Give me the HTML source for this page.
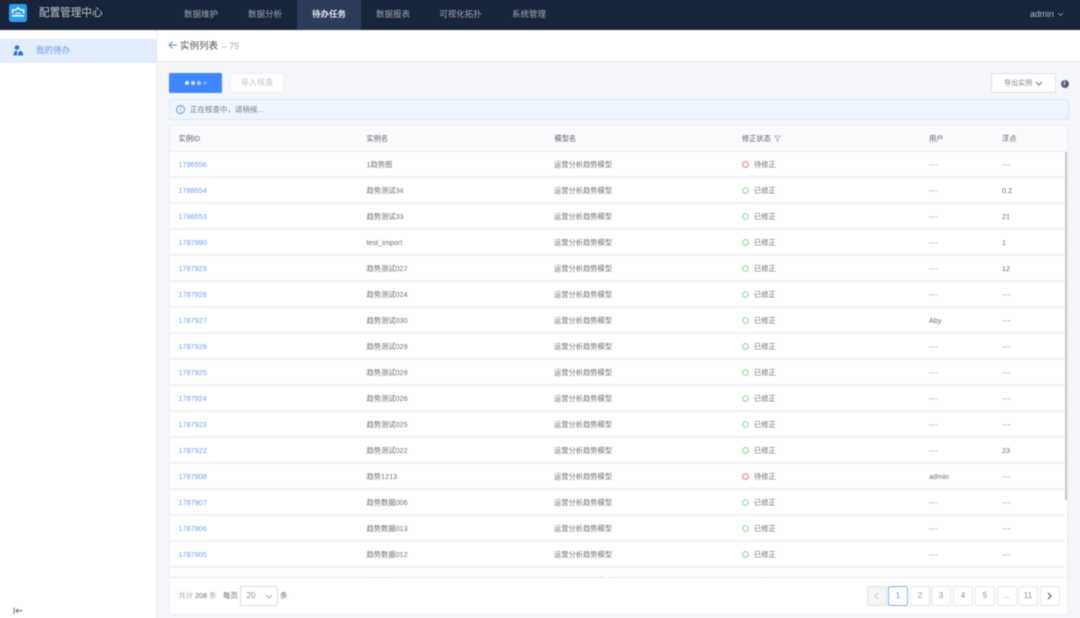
<!DOCTYPE html>
<html lang="zh">
<head>
<meta charset="utf-8">
<title>配置管理中心</title>
<style>
*{box-sizing:border-box;margin:0;padding:0}
html,body{width:1080px;height:618px;overflow:hidden;background:#f4f6fa}
body{position:relative;font-family:"Liberation Sans","Noto Sans CJK SC",sans-serif;font-size:8px;color:#666}
.a{position:absolute;white-space:nowrap}
#blur{position:absolute;left:0;top:0;width:1080px;height:618px;filter:blur(.45px)}
.top{left:-6px;top:-6px;width:1092px;height:36px;background:#18243a}
.nav{top:0;height:30px;line-height:29px;font-size:8.5px;color:#a3a8b2;text-align:center;width:64px}
.nav.on{top:-6px;height:36px;line-height:41px;background:#2d3b58;color:#e6e8ec;font-weight:bold}
.side{left:-6px;top:30px;width:163px;height:596px;background:#fff;border-right:1px solid #e9ebf0}
.head{left:157px;top:30px;width:929px;height:32px;background:#fff;border-bottom:1px solid #e6e8ee}
.tbl{left:169px;top:125px;width:899px;height:490px;background:#fff;border:1px solid #eceef3;overflow:hidden}
.th{left:0;top:0;width:897px;height:26px;background:#fafbfc;border-bottom:1px solid #eceef2}
.rw{left:0;width:895px;height:26px;border-bottom:2px solid #f1f2f5}
.c{position:absolute;top:0;line-height:25px;white-space:nowrap;font-size:7.25px;color:#6c6f75}
.h{line-height:25px;color:#5d6066;font-size:7.2px}
.l{color:#6ba0f5}
.n{letter-spacing:.6px;color:#85888d}
.d{position:absolute;top:8.5px;left:572px;width:7px;height:7px;border-radius:50%;box-shadow:inset 0 0 0 1.5px #a5e3ae}
.d.r{box-shadow:inset 0 0 0 1.5px #f99}
.foot{left:0;top:451px;width:897px;height:38px;background:#fff;border-top:1px solid #e8eaee}
.pg{top:586px;width:20px;height:20px;border:1px solid #e4e6ea;border-radius:2px;background:#fff;text-align:center;line-height:18px;font-size:8px;color:#8a8d92}
</style>
</head>
<body>
<div id="blur">
<div class="a top"></div>
<svg class="a" style="left:9px;top:4px" width="18" height="18" viewBox="0 0 18 18"><rect width="18" height="18" rx="2.5" fill="#2a9cf2"/><path d="M3.5 9.5V6H6.5L9 3.8 11.5 6H14.5V9.5" fill="none" stroke="#fff" stroke-width="1.4"/><path d="M6 9.3h6" stroke="#fff" stroke-width="1"/><path d="M3 11.8h12" stroke="#fff" stroke-width="1.6"/></svg>
<div class="a" style="left:39px;top:5px;font-size:10.6px;line-height:16px;color:#c6c9cf">配置管理中心</div>
<div class="a nav" style="left:169px">数据维护</div>
<div class="a nav" style="left:233px">数据分析</div>
<div class="a nav on" style="left:297px">待办任务</div>
<div class="a nav" style="left:361px">数据报表</div>
<div class="a nav" style="left:425px;width:71px">可视化拓扑</div>
<div class="a nav" style="left:497px">系统管理</div>
<div class="a" style="left:1030px;top:0;line-height:29px;font-size:8.8px;color:#b5b8bf">admin</div>
<svg class="a" style="left:1057px;top:12px" width="7" height="5" viewBox="0 0 7 5"><path d="M1 1l2.5 2.5L6 1" fill="none" stroke="#9a9ea8" stroke-width=".8"/></svg>

<div class="a side"></div>
<div class="a" style="left:-6px;top:39px;width:162px;height:24px;background:#e3edfd"></div>
<svg class="a" style="left:13px;top:45px" width="11" height="12" viewBox="0 0 11 12"><circle cx="4" cy="2.6" r="2.3" fill="#2f6fe0"/><path d="M0.5 10.5C.8 7 2 5.5 4 5.5V10.5z" fill="#2f6fe0"/><path d="M5 10.5V7.6L7.5 5.8 10 7.6V10.5z" fill="#2f6fe0"/></svg>
<div class="a" style="left:36px;top:44px;line-height:13px;font-size:8.5px;color:#6d9bee">我的待办</div>
<svg class="a" style="left:13px;top:607px" width="10" height="8" viewBox="0 0 10 8"><path d="M1 .5v6.5" stroke="#666c78" stroke-width="1"/><path d="M9.5 3.8H3.2M5 1.8L3 3.8 5 5.8" fill="none" stroke="#666c78" stroke-width="1"/></svg>

<div class="a head"></div>
<svg class="a" style="left:168px;top:40px" width="10" height="10" viewBox="0 0 10 10"><path d="M9 5H1.2M4.6 1.5L1 5l3.6 3.5" fill="none" stroke="#4a8cf0" stroke-width="1"/></svg>
<div class="a" style="left:180px;top:40px;line-height:14px;font-size:9.5px;color:#4f5258">实例列表</div>
<div class="a" style="left:222px;top:39px;line-height:15px;font-size:8.8px;color:#a5a8ad">– 75</div>

<div class="a" style="left:169px;top:73px;width:53px;height:20px;background:#3f86ff;border-radius:1px"></div>
<div class="a" style="left:184.5px;top:81px;width:4px;height:4px;border-radius:50%;background:#e6efff"></div>
<div class="a" style="left:190.5px;top:81px;width:4px;height:4px;border-radius:50%;background:#cfe0ff"></div>
<div class="a" style="left:196.5px;top:81px;width:4px;height:4px;border-radius:50%;background:#b4cdff"></div>
<div class="a" style="left:203px;top:81px;width:3.5px;height:3.5px;border-radius:50%;background:#6fa4ff"></div>
<div class="a" style="left:230px;top:73px;width:54px;height:20px;background:#fff;border:1px solid #eceef2;border-radius:1px;text-align:center;line-height:18px;font-size:8.2px;color:#c0c2c6">导入核查</div>

<div class="a" style="left:991px;top:73px;width:65px;height:20px;background:#fff;border:1px solid #dfe1e6;border-radius:1px"></div>
<div class="a" style="left:1004px;top:76px;line-height:14px;font-size:7.1px;color:#83868c">导出实例</div>
<svg class="a" style="left:1035px;top:81px" width="8" height="5" viewBox="0 0 8 5"><path d="M1 1l3 3 3-3" fill="none" stroke="#6e7178" stroke-width="1"/></svg>
<div class="a" style="left:1060.5px;top:80px;width:8px;height:8px;border-radius:50%;background:#566078;color:#fff;font-size:6px;line-height:8px;text-align:center;font-weight:bold">i</div>

<div class="a" style="left:169px;top:99px;width:900px;height:21px;background:#eff5fd;border:1px solid #dbe8fb;border-radius:1px"></div>
<div class="a" style="left:176px;top:105px;width:9px;height:9px;border-radius:50%;border:1px solid #5b9bf5;color:#4a8cf0;font-size:6.5px;line-height:7px;text-align:center">i</div>
<div class="a" style="left:190px;top:103px;line-height:13px;font-size:7.5px;color:#7a7d83">正在核查中，请稍候...</div>

<div class="a tbl">
  <div class="a th">
    <div class="c h" style="left:8.5px">实例ID</div>
    <div class="c h" style="left:196.5px">实例名</div>
    <div class="c h" style="left:384.5px">模型名</div>
    <div class="c h" style="left:572px">修正状态</div>
    <svg class="a" style="left:603.5px;top:9px" width="7" height="7" viewBox="0 0 7 7"><path d="M.5 1h6L4 3.6V6.4L3 6V3.6z" fill="none" stroke="#aeb1b6" stroke-width=".8"/></svg>
    <div class="c h" style="left:759px">用户</div>
    <div class="c h" style="left:832px">浮点</div>
  </div>

  <div class="a rw" style="top:26px"><div class="c l" style="left:8.5px">1796556</div><div class="c" style="left:196.5px">1趋势图</div><div class="c" style="left:384px">运营分析趋势模型</div><i class="d r"></i><div class="c" style="left:584px">待修正</div><div class="c n" style="left:759px">---</div><div class="c n" style="left:832px">---</div></div>
  <div class="a rw" style="top:52px"><div class="c l" style="left:8.5px">1788554</div><div class="c" style="left:196.5px">趋势测试34</div><div class="c" style="left:384px">运营分析趋势模型</div><i class="d"></i><div class="c" style="left:584px">已修正</div><div class="c n" style="left:759px">---</div><div class="c" style="left:832px">0.2</div></div>
  <div class="a rw" style="top:78px"><div class="c l" style="left:8.5px">1788553</div><div class="c" style="left:196.5px">趋势测试33</div><div class="c" style="left:384px">运营分析趋势模型</div><i class="d"></i><div class="c" style="left:584px">已修正</div><div class="c n" style="left:759px">---</div><div class="c" style="left:832px">21</div></div>
  <div class="a rw" style="top:104px"><div class="c l" style="left:8.5px">1787990</div><div class="c" style="left:196.5px">test_import</div><div class="c" style="left:384px">运营分析趋势模型</div><i class="d"></i><div class="c" style="left:584px">已修正</div><div class="c n" style="left:759px">---</div><div class="c" style="left:832px">1</div></div>
  <div class="a rw" style="top:130px"><div class="c l" style="left:8.5px">1787929</div><div class="c" style="left:196.5px">趋势测试027</div><div class="c" style="left:384px">运营分析趋势模型</div><i class="d"></i><div class="c" style="left:584px">已修正</div><div class="c n" style="left:759px">---</div><div class="c" style="left:832px">12</div></div>
  <div class="a rw" style="top:156px"><div class="c l" style="left:8.5px">1787928</div><div class="c" style="left:196.5px">趋势测试024</div><div class="c" style="left:384px">运营分析趋势模型</div><i class="d"></i><div class="c" style="left:584px">已修正</div><div class="c n" style="left:759px">---</div><div class="c n" style="left:832px">---</div></div>
  <div class="a rw" style="top:182px"><div class="c l" style="left:8.5px">1787927</div><div class="c" style="left:196.5px">趋势测试030</div><div class="c" style="left:384px">运营分析趋势模型</div><i class="d"></i><div class="c" style="left:584px">已修正</div><div class="c" style="left:759px">Aby</div><div class="c n" style="left:832px">---</div></div>
  <div class="a rw" style="top:208px"><div class="c l" style="left:8.5px">1787926</div><div class="c" style="left:196.5px">趋势测试029</div><div class="c" style="left:384px">运营分析趋势模型</div><i class="d"></i><div class="c" style="left:584px">已修正</div><div class="c n" style="left:759px">---</div><div class="c n" style="left:832px">---</div></div>
  <div class="a rw" style="top:234px"><div class="c l" style="left:8.5px">1787925</div><div class="c" style="left:196.5px">趋势测试028</div><div class="c" style="left:384px">运营分析趋势模型</div><i class="d"></i><div class="c" style="left:584px">已修正</div><div class="c n" style="left:759px">---</div><div class="c n" style="left:832px">---</div></div>
  <div class="a rw" style="top:260px"><div class="c l" style="left:8.5px">1787924</div><div class="c" style="left:196.5px">趋势测试026</div><div class="c" style="left:384px">运营分析趋势模型</div><i class="d"></i><div class="c" style="left:584px">已修正</div><div class="c n" style="left:759px">---</div><div class="c n" style="left:832px">---</div></div>
  <div class="a rw" style="top:286px"><div class="c l" style="left:8.5px">1787923</div><div class="c" style="left:196.5px">趋势测试025</div><div class="c" style="left:384px">运营分析趋势模型</div><i class="d"></i><div class="c" style="left:584px">已修正</div><div class="c n" style="left:759px">---</div><div class="c n" style="left:832px">---</div></div>
  <div class="a rw" style="top:312px"><div class="c l" style="left:8.5px">1787922</div><div class="c" style="left:196.5px">趋势测试022</div><div class="c" style="left:384px">运营分析趋势模型</div><i class="d"></i><div class="c" style="left:584px">已修正</div><div class="c n" style="left:759px">---</div><div class="c" style="left:832px">23</div></div>
  <div class="a rw" style="top:338px"><div class="c l" style="left:8.5px">1787908</div><div class="c" style="left:196.5px">趋势1213</div><div class="c" style="left:384px">运营分析趋势模型</div><i class="d r"></i><div class="c" style="left:584px">待修正</div><div class="c" style="left:759px">admin</div><div class="c n" style="left:832px">---</div></div>
  <div class="a rw" style="top:364px"><div class="c l" style="left:8.5px">1787907</div><div class="c" style="left:196.5px">趋势数据006</div><div class="c" style="left:384px">运营分析趋势模型</div><i class="d"></i><div class="c" style="left:584px">已修正</div><div class="c n" style="left:759px">---</div><div class="c n" style="left:832px">---</div></div>
  <div class="a rw" style="top:390px"><div class="c l" style="left:8.5px">1787906</div><div class="c" style="left:196.5px">趋势数据013</div><div class="c" style="left:384px">运营分析趋势模型</div><i class="d"></i><div class="c" style="left:584px">已修正</div><div class="c n" style="left:759px">---</div><div class="c n" style="left:832px">---</div></div>
  <div class="a rw" style="top:416px"><div class="c l" style="left:8.5px">1787905</div><div class="c" style="left:196.5px">趋势数据012</div><div class="c" style="left:384px">运营分析趋势模型</div><i class="d"></i><div class="c" style="left:584px">已修正</div><div class="c n" style="left:759px">---</div><div class="c n" style="left:832px">---</div></div>
  <div class="a rw" style="top:442px;border:0"><div class="c l" style="left:8.5px">1787904</div><div class="c" style="left:196.5px">趋势数据011</div><div class="c" style="left:384px">运营分析趋势模型</div><i class="d"></i><div class="c" style="left:584px">已修正</div></div>

  <div class="a" style="left:895px;top:26px;width:3px;height:348px;background:#c6c7ca;border-radius:1px"></div>
  <div class="a foot"></div>
</div>

<div class="a" style="left:178.5px;top:589px;line-height:14px;font-size:7.25px;color:#a4a7ac">共计 <span style="color:#6c6f75">208</span> 条</div>
<div class="a" style="left:223px;top:589px;line-height:14px;font-size:7.5px;color:#6c6f75">每页</div>
<div class="a" style="left:240px;top:586px;width:38px;height:20px;background:#fff;border:1px solid #dcdee3;border-radius:1px"></div>
<div class="a" style="left:246.5px;top:589px;line-height:14px;font-size:8px;color:#8a8d92">20</div>
<svg class="a" style="left:265px;top:594px" width="8" height="5" viewBox="0 0 8 5"><path d="M1 1l3 3 3-3" fill="none" stroke="#9a9da3" stroke-width=".8"/></svg>
<div class="a" style="left:280px;top:589px;line-height:14px;font-size:7.5px;color:#6c6f75">条</div>

<div class="a pg" style="left:867px;background:#f5f6f8"></div>
<svg class="a" style="left:874px;top:592px" width="5" height="8" viewBox="0 0 5 8"><path d="M4 1L1 4l3 3" fill="none" stroke="#c5c7cc" stroke-width="1"/></svg>
<div class="a pg" style="left:888px;border-color:#7fb0f7;color:#6ba0f5">1</div>
<div class="a pg" style="left:910px">2</div>
<div class="a pg" style="left:931px">3</div>
<div class="a pg" style="left:953px">4</div>
<div class="a pg" style="left:975px">5</div>
<div class="a pg" style="left:997px">...</div>
<div class="a pg" style="left:1018px">11</div>
<div class="a pg" style="left:1040px"></div>
<svg class="a" style="left:1047px;top:592px" width="5" height="8" viewBox="0 0 5 8"><path d="M1 1l3 3-3 3" fill="none" stroke="#55585e" stroke-width="1.1"/></svg>
</div>
</body>
</html>
